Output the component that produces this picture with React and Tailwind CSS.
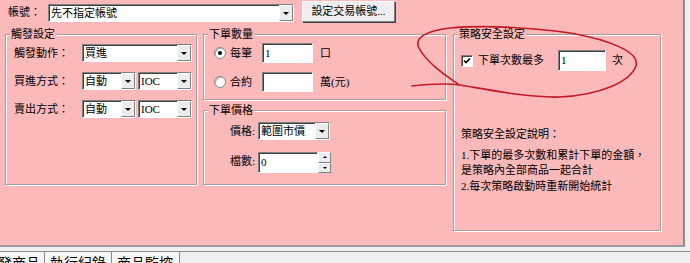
import React from "react";

const PINK = "bg-[#fbb9ba]";
const sunken =
  "border border-t-[#808080] border-l-[#808080] border-b-white border-r-white shadow-[inset_1px_1px_0_#404040]";
const raised =
  "border border-t-white border-l-white border-b-[#808080] border-r-[#808080]";

function Arrow() {
  return (
    <div className={`w-[14px] h-full flex items-center justify-center bg-[#ececec] ${raised}`}>
      <div className="w-0 h-0 border-l-[3px] border-r-[3px] border-t-[3px] border-l-transparent border-r-transparent border-t-black" />
    </div>
  );
}

function Combo({ value, className = "" }) {
  return (
    <div className={`flex h-[18px] bg-white ${sunken} ${className}`}>
      <span className="flex-1 pl-[2px] leading-[16px] whitespace-nowrap overflow-hidden">{value}</span>
      <Arrow />
    </div>
  );
}

function TextBox({ value, className = "" }) {
  return <div className={`bg-white pl-[2px] leading-[18px] ${sunken} ${className}`}>{value}</div>;
}

function Radio({ checked }) {
  return (
    <div className="w-[12px] h-[12px] rounded-full bg-white border border-[#8a8a8a] shadow-[inset_1px_1px_0_#b0b0b0] flex items-center justify-center">
      {checked && <div className="w-[4px] h-[4px] rounded-full bg-black" />}
    </div>
  );
}

function Check() {
  return (
    <div className={`w-[12px] h-[12px] bg-white ${sunken} flex items-center justify-center`}>
      <svg width="8" height="8" viewBox="0 0 8 8">
        <path d="M1 3.5 L3 5.5 L7 1.5" stroke="#000" strokeWidth="1.6" fill="none" />
      </svg>
    </div>
  );
}

function Group({ title, className = "", children }) {
  return (
    <div className={`relative border border-[#a89c9c] shadow-[inset_1px_1px_0_#fff,1px_1px_0_#fff] ${className}`}>
      <span className={`absolute -top-[8px] left-[4px] px-[1px] leading-[14px] ${PINK}`}>{title}</span>
      {children}
    </div>
  );
}

function Spin({ value }) {
  return (
    <div className="flex h-[21px]">
      <TextBox value={value} className="w-[60px] h-[21px]" />
      <div className="flex flex-col w-[13px]">
        <div className={`flex-1 flex items-center justify-center bg-[#ececec] ${raised}`}>
          <div className="w-0 h-0 border-l-[2px] border-r-[2px] border-b-[2px] border-l-transparent border-r-transparent border-b-black" />
        </div>
        <div className={`flex-1 flex items-center justify-center bg-[#ececec] ${raised}`}>
          <div className="w-0 h-0 border-l-[2px] border-r-[2px] border-t-[2px] border-l-transparent border-r-transparent border-t-black" />
        </div>
      </div>
    </div>
  );
}

export default function App() {
  return (
    <div className="relative w-[690px] h-[263px] overflow-hidden bg-[#f0f0f0] text-[11px] text-black font-['Liberation_Serif','Noto_Sans_CJK_TC',serif]">
      <div className={`w-[685px] h-[247px] ${PINK} border-r-2 border-b-2 border-r-[#8c8c8c] border-b-[#9a9a9a] flex flex-col`}>
        {/* account row */}
        <div className="flex items-start h-[22px] pl-[8px]">
          <span className="w-[40px] mt-[5px] leading-[14px]">帳號：</span>
          <Combo value="先不指定帳號" className="w-[246px] mt-[4px]" />
          <div className={`ml-[8px] mt-[1px] w-[93px] h-[21px] flex items-center justify-center bg-[#efeded] ${raised} shadow-[1px_1px_0_#404040]`}>
            設定交易帳號...
          </div>
        </div>

        <div className="flex items-start mt-[12px]">
          {/* trigger settings */}
          <Group title="觸發設定" className="ml-[5px] w-[192px] h-[151px]">
            <div className="flex flex-col pt-[9px] gap-[10px]">
              <div className="flex items-center h-[18px] pl-[8px]">
                <span className="w-[68px]">觸發動作：</span>
                <Combo value="買進" className="w-[110px]" />
              </div>
              <div className="flex items-center h-[18px] pl-[8px]">
                <span className="w-[68px]">買進方式：</span>
                <Combo value="自動" className="w-[54px]" />
                <Combo value="IOC" className="w-[54px] ml-[2px]" />
              </div>
              <div className="flex items-center h-[18px] pl-[8px]">
                <span className="w-[68px]">賣出方式：</span>
                <Combo value="自動" className="w-[54px]" />
                <Combo value="IOC" className="w-[54px] ml-[2px]" />
              </div>
            </div>
          </Group>

          {/* middle column */}
          <div className="ml-[6px] w-[243px] flex flex-col">
            <Group title="下單數量" className="h-[66px]">
              <div className="flex flex-col pt-[8px] gap-[9px]">
                <div className="flex items-center h-[20px] pl-[10px]">
                  <div className="w-[48px] flex items-center">
                    <Radio checked />
                    <span className="ml-[4px]">每筆</span>
                  </div>
                  <TextBox value="1" className="w-[51px] h-[20px]" />
                  <span className="ml-[7px]">口</span>
                </div>
                <div className="flex items-center h-[20px] pl-[10px]">
                  <div className="w-[48px] flex items-center">
                    <Radio />
                    <span className="ml-[4px]">合約</span>
                  </div>
                  <TextBox value="" className="w-[51px] h-[20px]" />
                  <span className="ml-[7px]">萬(元)</span>
                </div>
              </div>
            </Group>

            <Group title="下單價格" className="mt-[10px] h-[75px]">
              <div className="flex flex-col pt-[11px]">
                <div className="flex items-center h-[18px]">
                  <span className="w-[54px] text-right pr-[3px]">價格:</span>
                  <Combo value="範圍市價" className="w-[72px]" />
                </div>
                <div className="flex items-start h-[21px] mt-[12px]">
                  <span className="w-[54px] text-right pr-[3px] mt-[1px]">檔數:</span>
                  <Spin value="0" />
                </div>
              </div>
            </Group>
          </div>

          {/* safety settings */}
          <Group title="策略安全設定" className="ml-[7px] w-[208px] h-[197px]">
            <div className="flex flex-col pt-[15px] pl-[7px]">
              <div className="flex items-center h-[21px]">
                <div className="w-[97px] flex items-center">
                  <Check />
                  <span className="ml-[5px]">下單次數最多</span>
                </div>
                <TextBox value="1" className="w-[48px] h-[21px]" />
                <span className="ml-[6px]">次</span>
              </div>
              <div className="mt-[56px] leading-[14px]">策略安全設定說明：</div>
              <div className="mt-[7px] leading-[15px] whitespace-nowrap">
                1.下單的最多次數和累計下單的金額，
                <br />
                是策略內全部商品一起合計
              </div>
              <div className="mt-[1px] leading-[15px] whitespace-nowrap">2.每次策略啟動時重新開始統計</div>
            </div>
          </Group>
        </div>
      </div>

      {/* bottom tabs */}
      <div className="mt-[4px] flex h-[14px] border-t border-[#8c8c8c] text-[14px] leading-[16px] font-['Noto_Sans_CJK_TC',sans-serif]">
        <div className="w-[45px] border-r border-[#8c8c8c] overflow-hidden bg-[#f7f7f7]">
          <span className="block -ml-[2px] pt-[2px] whitespace-nowrap">發商品</span>
        </div>
        <div className="w-[67px] border-r border-[#8c8c8c] pl-[5px] pt-[2px] whitespace-nowrap bg-[#f7f7f7]">執行紀錄</div>
        <div className="w-[68px] border-r border-[#8c8c8c] pl-[5px] pt-[2px] whitespace-nowrap bg-[#f7f7f7]">商品監控</div>
      </div>

      {/* hand-drawn red annotation */}
      <svg className="absolute inset-0 pointer-events-none" width="690" height="263">
        <path
          d="M412 86 C430 84 445 83 460 85 C490 90 530 98 560 97 C600 95 630 82 636 66 C640 52 610 40 570 33 C530 27 480 25 450 28 C425 31 414 38 419 48 C426 62 445 75 458 84"
          stroke="#c41a24"
          strokeWidth="1.6"
          fill="none"
          strokeLinecap="round"
        />
      </svg>
    </div>
  );
}
